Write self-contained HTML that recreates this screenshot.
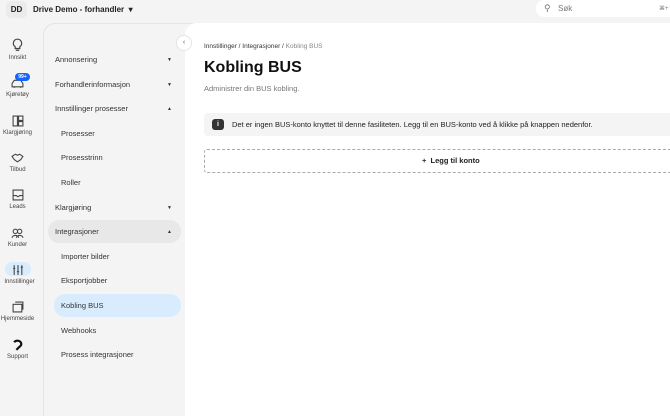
<!DOCTYPE html>
<html><head><meta charset="utf-8"><style>
*{box-sizing:border-box;margin:0;padding:0}
html,body{width:670px;height:416px;overflow:hidden}
body{background:#f4f4f4;font-family:"Liberation Sans",sans-serif;color:#222;position:relative}
.top{position:absolute;left:0;top:0;height:23px;width:670px}
.dd{position:absolute;left:6px;top:1px;width:21px;height:17px;border-radius:5px;background:#ebebeb;font-size:8px;font-weight:bold;text-align:center;line-height:17px}
.org{position:absolute;left:33px;top:5px;font-size:8px;font-weight:bold}
.search{position:absolute;left:536px;top:0;width:134px;height:17px;background:#fff;border-radius:8px 0 0 8px;font-size:8px;color:#777}
.rail{position:absolute;left:0;top:23px;width:43px}
.ri{position:absolute;left:0;width:35px;text-align:center;font-size:6px;color:#444}
.ri svg{display:block;margin:0 auto 3px}
.sub{position:absolute;left:43px;top:23px;width:150px;height:393px;background:#f4f4f4;border:1px solid #e4e4e4;border-bottom:none;border-radius:12px 0 0 0}
.it{position:absolute;font-size:7.5px;color:#333}
.main{position:absolute;left:185px;top:23px;width:485px;height:393px;background:#fff;border-radius:12px 0 0 0;overflow:hidden}
.car{position:absolute;font-size:5px;color:#333}
</style></head><body>
<div class="top"><div class="dd">DD</div><div class="org">Drive Demo - forhandler &nbsp;▾</div>
<div class="search"><span style="position:absolute;left:8px;top:3px;font-size:9px">⚲</span><span style="position:absolute;left:22px;top:4px">Søk</span><span style="position:absolute;left:123px;top:5px;font-size:6px">⌘+</span></div></div>
<div class="rail">
<div class="ri" style="top:15px;left:0"><svg width="13" height="14" viewBox="0 0 11 12"><path d="M5.5 1a3.5 3.5 0 0 0-2 6.4V9h4V7.4a3.5 3.5 0 0 0-2-6.4zM4 10.5h3" fill="none" stroke="#444" stroke-width="1"/></svg>Innsikt</div>
<div class="ri" style="top:54px"><svg width="13" height="12" viewBox="0 0 12 11"><path d="M1 6l2-3h6l2 3v3H1zM3 9v1M9 9v1" fill="none" stroke="#444"/></svg>Kjøretøy</div>
<div style="position:absolute;left:15px;top:50px;width:15px;height:8px;background:#1463ff;border-radius:4px;color:#fff;font-size:5px;font-weight:bold;text-align:center;line-height:8px">99+</div>
<div class="ri" style="top:92px"><svg width="12" height="12" viewBox="0 0 11 11"><path d="M1 1h4v9H1zM6 1h4v4H6zM6 6h4v4H6z" fill="none" stroke="#444"/></svg>Klargjøring</div>
<div class="ri" style="top:129px"><svg width="13" height="12" viewBox="0 0 12 11"><path d="M1 4l3-2 2 1 2-1 3 2-2 3-3 2-3-2z" fill="none" stroke="#444"/></svg>Tilbud</div>
<div class="ri" style="top:166px"><svg width="12" height="12" viewBox="0 0 11 11"><path d="M1 1h9v9H1zM1 6h3l1 1h1l1-1h3" fill="none" stroke="#444"/></svg>Leads</div>
<div class="ri" style="top:204px"><svg width="13" height="12" viewBox="0 0 12 11"><circle cx="4" cy="4" r="2" fill="none" stroke="#444"/><circle cx="8" cy="4" r="2" fill="none" stroke="#444"/><path d="M1 10c0-3 6-3 6 0M5 10c0-3 6-3 6 0" fill="none" stroke="#444"/></svg>Kunder</div>
<div style="position:absolute;left:5px;top:239px;width:26px;height:14px;background:#d9ecfd;border-radius:7px"></div>
<div class="ri" style="top:241px"><svg width="12" height="12" viewBox="0 0 11 11"><path d="M2 1v9M5.5 1v9M9 1v9M1 4h2M4.5 7h2M8 3h2" fill="none" stroke="#444"/></svg><span style="position:relative;left:2px">Innstillinger</span></div>
<div class="ri" style="top:278px"><svg width="12" height="12" viewBox="0 0 11 11"><path d="M1 3h8v7H1zM3 1h7v7" fill="none" stroke="#444"/></svg>Hjemmeside</div>
<div class="ri" style="top:316px"><svg width="12" height="12" viewBox="0 0 11 11"><path d="M2 3a3.5 3 0 1 1 5 4L4 10" fill="none" stroke="#111" stroke-width="2"/></svg>Support</div>
</div>
<div class="sub">
<div class="it" style="left:11px;top:31px">Annonsering</div><div class="car" style="left:123px;top:33px">▼</div>
<div class="it" style="left:11px;top:56px">Forhandlerinformasjon</div><div class="car" style="left:123px;top:58px">▼</div>
<div class="it" style="left:11px;top:80px">Innstillinger prosesser</div><div class="car" style="left:123px;top:82px">▲</div>
<div class="it" style="left:17px;top:105px">Prosesser</div>
<div class="it" style="left:17px;top:129px">Prosesstrinn</div>
<div class="it" style="left:17px;top:154px">Roller</div>
<div class="it" style="left:11px;top:179px">Klargjøring</div><div class="car" style="left:123px;top:181px">▼</div>
<div style="position:absolute;left:4px;top:196px;width:133px;height:23px;background:#e8e8e8;border-radius:11px"></div>
<div class="it" style="left:11px;top:203px">Integrasjoner</div><div class="car" style="left:123px;top:205px">▲</div>
<div class="it" style="left:17px;top:228px">Importer bilder</div>
<div class="it" style="left:17px;top:252px">Eksportjobber</div>
<div style="position:absolute;left:10px;top:270px;width:127px;height:23px;background:#d9ecfd;border-radius:11px"></div>
<div class="it" style="left:17px;top:277px">Kobling BUS</div>
<div class="it" style="left:17px;top:302px">Webhooks</div>
<div class="it" style="left:17px;top:326px">Prosess integrasjoner</div>
</div>
<div style="position:absolute;left:176px;top:35px;width:16px;height:16px;border-radius:50%;background:#fff;border:1px solid #e4e4e4;font-size:7px;text-align:center;line-height:14px;color:#555;z-index:2">‹</div>
<div class="main">
<div style="position:absolute;left:19px;top:20px;font-size:6.5px;color:#333">Innstillinger / Integrasjoner / <span style="color:#888">Kobling BUS</span></div>
<div style="position:absolute;left:19px;top:36px;font-size:16px;font-weight:bold;color:#111">Kobling BUS</div>
<div style="position:absolute;left:19px;top:61px;font-size:7.5px;color:#777">Administrer din BUS kobling.</div>
<div style="position:absolute;left:19px;top:90px;width:480px;height:23px;background:#f4f4f4;border-radius:4px">
<div style="position:absolute;left:8px;top:6px;width:12px;height:11px;background:#333;border-radius:3px;color:#fff;font-size:7px;font-weight:bold;text-align:center;line-height:11px">i</div>
<div style="position:absolute;left:28px;top:7px;font-size:7.5px;color:#222">Det er ingen BUS-konto knyttet til denne fasiliteten. Legg til en BUS-konto ved å klikke på knappen nedenfor.</div></div>
<div style="position:absolute;left:19px;top:126px;width:480px;height:24px;border:1px dashed #aaa;border-radius:3px">
<div style="position:absolute;left:217px;top:6px;font-size:7.5px;font-weight:bold;color:#222">+&nbsp; Legg til konto</div></div>
</div>
</body></html>
